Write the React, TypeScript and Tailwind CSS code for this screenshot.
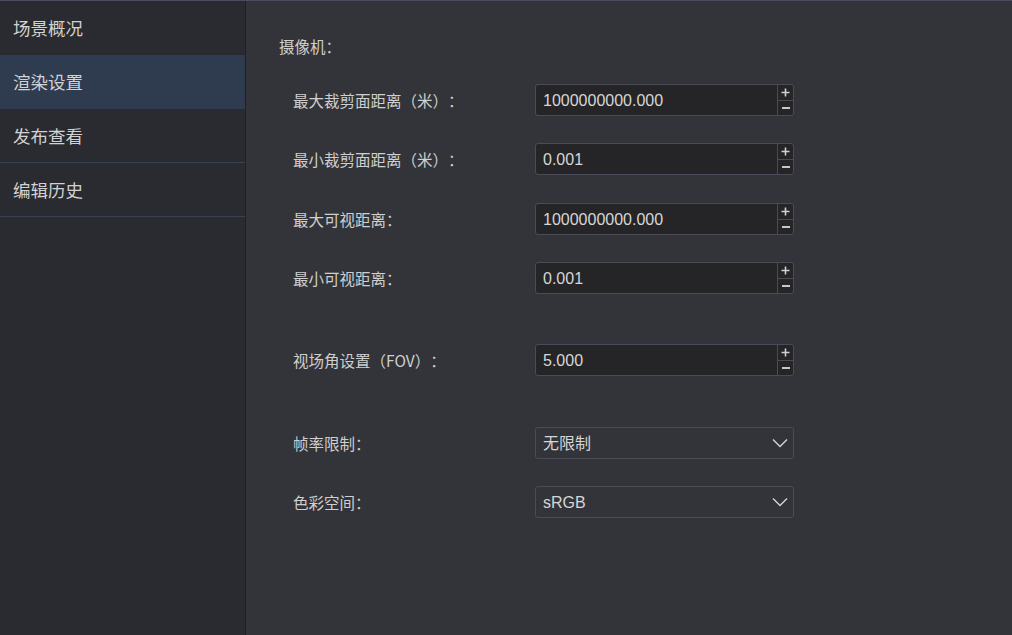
import React from 'react';

const navItems = ['场景概况', '渲染设置', '发布查看', '编辑历史'];

const cjk = {
  fontFamily: '"Noto Sans CJK SC", "Liberation Sans", sans-serif',
};

function NumberInput({ value }: { value: string }) {
  return (
    <div className="flex h-[32px] w-[259px] rounded-[3px] border border-[#4a4b56] bg-[#252528]">
      <div className="flex flex-1 items-center pl-[7px] pt-[1px] text-[16px] text-[#d6d6d6]">{value}</div>
      <div className="flex w-[16px] flex-col border-l border-[#4a4b56]">
        <div className="flex flex-1 items-center justify-center border-b border-[#4a4b56]">
          <svg width="9" height="9" viewBox="0 0 9 9">
            <path d="M4.5 0.5 V8.5 M0.5 4.5 H8.5" stroke="#d0d0d0" strokeWidth="1.6" />
          </svg>
        </div>
        <div className="flex flex-1 items-center justify-center">
          <div className="h-[1.5px] w-[8px] bg-[#c8c8c8]" />
        </div>
      </div>
    </div>
  );
}

function SelectBox({ value }: { value: string }) {
  return (
    <div className="flex h-[32px] w-[259px] items-center justify-between rounded-[3px] border border-[#4a4b56] bg-[#333439] pl-[7px] pr-[5px]">
      <span className="pt-[1px] text-[16px] text-[#d6d6d6]">{value}</span>
      <svg width="16" height="10" viewBox="0 0 16 10" fill="none">
        <path d="M1 1.5 L8 8.5 L15 1.5" stroke="#d0d0d0" strokeWidth="1.5" />
      </svg>
    </div>
  );
}

function Row({ label, children, className }: { label: string; children: React.ReactNode; className?: string }) {
  return (
    <div className={'flex items-center ' + (className || '')}>
      <div className="w-[242px] pt-[1px] text-[15.5px] text-[#cfcfcf] [text-spacing-trim:space-all]" style={cjk}>
        {label}
      </div>
      {children}
    </div>
  );
}

export default function App() {
  return (
    <div
      className="flex h-[635px] w-[1012px] border-t border-[#4b4d5c] bg-[#333439]"
      style={{ fontFamily: '"Liberation Sans", "Noto Sans CJK SC", sans-serif' }}
    >
      {/* 左侧菜单 */}
      <div className="w-[246px] border-r border-[#1f2024] bg-[#2a2b30]">
        {navItems.map((item, i) => (
          <div
            key={item}
            className={
              'flex h-[54px] items-center pl-[13px] pt-[1px] text-[17.5px] text-[#d2d2d2] ' +
              (i === 1 ? 'bg-[#2f3b4e] ' : '') +
              (i >= 2 ? 'border-b border-[#3a4154]' : '')
            }
            style={cjk}
          >
            {item}
          </div>
        ))}
      </div>

      {/* 右侧设置 */}
      <div className="flex-1 pl-[33px] pt-[35px]">
        <div className="h-[20px] text-[15.5px] leading-[20px] text-[#cfcfcf] [text-spacing-trim:space-all]" style={cjk}>
          摄像机：
        </div>
        <div className="flex flex-col pl-[14px]">
          <Row label="最大裁剪面距离（米）：" className="mt-[28px]">
            <NumberInput value="1000000000.000" />
          </Row>
          <Row label="最小裁剪面距离（米）：" className="mt-[27px]">
            <NumberInput value="0.001" />
          </Row>
          <Row label="最大可视距离：" className="mt-[28px]">
            <NumberInput value="1000000000.000" />
          </Row>
          <Row label="最小可视距离：" className="mt-[27px]">
            <NumberInput value="0.001" />
          </Row>
          <Row label="视场角设置（FOV）：" className="mt-[50px]">
            <NumberInput value="5.000" />
          </Row>
          <Row label="帧率限制：" className="mt-[51px]">
            <SelectBox value="无限制" />
          </Row>
          <Row label="色彩空间：" className="mt-[27px]">
            <SelectBox value="sRGB" />
          </Row>
        </div>
      </div>
    </div>
  );
}
